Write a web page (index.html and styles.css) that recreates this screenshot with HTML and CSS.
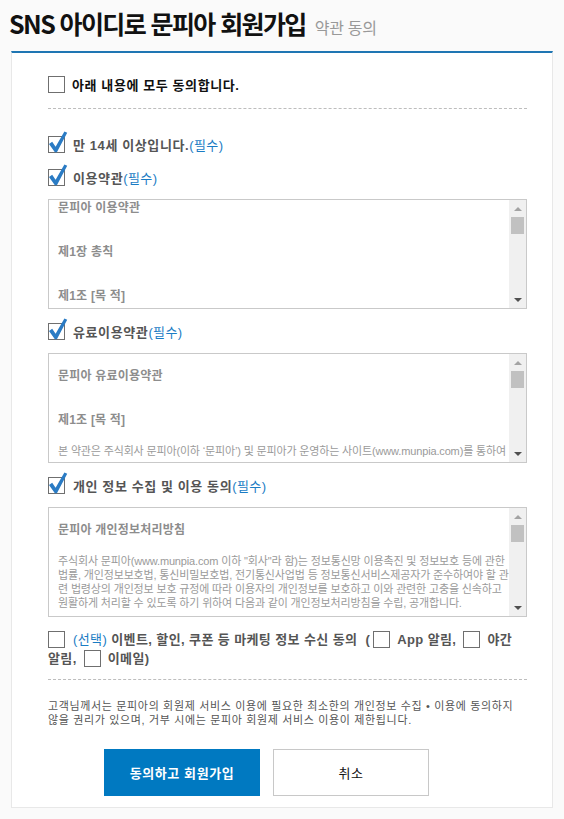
FILE: index.html
```html
<!DOCTYPE html>
<html lang="ko">
<head>
<meta charset="utf-8">
<title>SNS 아이디로 문피아 회원가입 - 약관 동의</title>
<link rel="stylesheet" href="styles.css">
</head>
<body>
<div class="page">
  <header class="head">
    <h1 class="title">SNS 아이디로 문피아 회원가입</h1>
    <span class="subtitle">약관 동의</span>
  </header>
  <main class="panel">
    <div class="row row-all"><span class="cb"></span><span class="lbl lbl-all">아래 내용에 모두 동의합니다.</span></div>
    <hr class="dash dash-top">

    <div class="row row-age"><span class="cb cb-on"><svg class="tick" width="20" height="22" viewBox="0 0 20 22"><path d="M1 13 L4.2 10.8 L7.6 15.8 L16.4 0.6 L19.2 1.8 L8.9 21.2 L6.9 21.2 Z"/></svg></span><span class="lbl">만 14세 이상입니다.</span><span class="req">(필수)</span></div>

    <div class="row row-gap"><span class="cb cb-on"><svg class="tick" width="20" height="22" viewBox="0 0 20 22"><path d="M1 13 L4.2 10.8 L7.6 15.8 L16.4 0.6 L19.2 1.8 L8.9 21.2 L6.9 21.2 Z"/></svg></span><span class="lbl">이용약관</span><span class="req">(필수)</span></div>
    <div class="terms">
      <div class="terms-body terms-body-top">
        <p class="t-title">문피아 이용약관</p>
        <p class="t-head">제1장 총칙</p>
        <p class="t-head">제1조 [목 적]</p>
      </div>
      <div class="sbar"><span class="sb-btn sb-up"></span><span class="sb-thumb"></span><span class="sb-fill"></span><span class="sb-btn sb-down"></span></div>
    </div>

    <div class="row row-after"><span class="cb cb-on"><svg class="tick" width="20" height="22" viewBox="0 0 20 22"><path d="M1 13 L4.2 10.8 L7.6 15.8 L16.4 0.6 L19.2 1.8 L8.9 21.2 L6.9 21.2 Z"/></svg></span><span class="lbl">유료이용약관</span><span class="req">(필수)</span></div>
    <div class="terms">
      <div class="terms-body">
        <p class="t-title">문피아 유료이용약관</p>
        <p class="t-head">제1조 [목 적]</p>
        <p class="t-text">본 약관은 주식회사 문피아(이하 ‘문피아’) 및 문피아가 운영하는 사이트(www.munpia.com)를 통하여</p>
      </div>
      <div class="sbar"><span class="sb-btn sb-up"></span><span class="sb-thumb"></span><span class="sb-fill"></span><span class="sb-btn sb-down"></span></div>
    </div>

    <div class="row row-after"><span class="cb cb-on"><svg class="tick" width="20" height="22" viewBox="0 0 20 22"><path d="M1 13 L4.2 10.8 L7.6 15.8 L16.4 0.6 L19.2 1.8 L8.9 21.2 L6.9 21.2 Z"/></svg></span><span class="lbl">개인 정보 수집 및 이용 동의</span><span class="req">(필수)</span></div>
    <div class="terms">
      <div class="terms-body">
        <p class="t-title">문피아 개인정보처리방침</p>
        <p class="t-text">주식회사 문피아(www.munpia.com 이하 "회사"라 함)는 정보통신망 이용촉진 및 정보보호 등에 관한<br>법률, 개인정보보호법, 통신비밀보호법, 전기통신사업법 등 정보통신서비스제공자가 준수하여야 할 관<br>련 법령상의 개인정보 보호 규정에 따라 이용자의 개인정보를 보호하고 이와 관련한 고충을 신속하고<br>원활하게 처리할 수 있도록 하기 위하여 다음과 같이 개인정보처리방침을 수립, 공개합니다.</p>
      </div>
      <div class="sbar"><span class="sb-btn sb-up"></span><span class="sb-thumb"></span><span class="sb-fill"></span><span class="sb-btn sb-down"></span></div>
    </div>

    <div class="mkt"><span class="cb cb-first"></span><span class="opt">(선택)</span> 이벤트, 할인, 쿠폰 등 마케팅 정보 수신 동의 <span class="paren">(</span><span class="cb cb-in"></span>App 알림, <span class="cb cb-in"></span>야간<br>알림, <span class="cb cb-in"></span>이메일)</div>
    <hr class="dash dash-bottom">

    <p class="info">고객님께서는 문피아의 회원제 서비스 이용에 필요한 최소한의 개인정보 수집 • 이용에 동의하지<br>않을 권리가 있으며, 거부 시에는 문피아 회원제 서비스 이용이 제한됩니다.</p>

    <div class="btns">
      <button class="btn btn-ok" type="button">동의하고 회원가입</button>
      <button class="btn btn-cancel" type="button">취소</button>
    </div>
  </main>
</div>
</body>
</html>
```

FILE: styles.css
```css
* { box-sizing: border-box; }
html, body { margin: 0; padding: 0; }
body {
  background: #fafafa;
  font-family: "Liberation Sans", "Noto Sans CJK KR", sans-serif;
  color: #333;
}
.page { width: 564px; padding: 0 11px; }

.head {
  height: 51px;
  display: flex;
  align-items: baseline;
  padding-top: 6px;
  margin-left: -2px;
}
.title {
  margin: 0;
  font-family: "Noto Sans CJK KR", sans-serif;
  font-size: 25px;
  line-height: 34px;
  font-weight: 700;
  letter-spacing: -1.6px;
  color: #111;
}
.subtitle {
  margin-left: 9px;
  font-family: "Noto Sans CJK KR", sans-serif;
  font-size: 16px;
  letter-spacing: -0.3px;
  color: #999;
}

.panel {
  background: #fff;
  border: 1px solid #e8e8e8;
  border-top: 2px solid #1f76b3;
  padding: 21px 25px 11px 36px;
}

.row {
  display: flex;
  align-items: center;
  height: 20px;
  font-size: 13px;
}
.row-age { margin-top: 25px; }
.row-gap { margin-top: 13px; }
.row-after { margin-top: 12px; }

.cb {
  position: relative;
  display: inline-block;
  width: 17px;
  height: 17px;
  border: 1px solid #6f6f6f;
  background: #fff;
  flex: none;
}
.tick {
  position: absolute;
  left: -1px;
  top: -6px;
  fill: #2a7bc4;
}
.lbl {
  margin-left: 8px;
  font-weight: 700;
  color: #555;
  letter-spacing: 0.6px;
}
.lbl-all { margin-left: 7px; color: #111; }
.req { color: #1a7cc4; letter-spacing: 0.4px; }

.dash {
  margin: 0;
  border: 0;
  border-top: 1px dashed #bdbdbd;
  height: 0;
}
.dash-top { margin-top: 14px; }
.dash-bottom { margin-top: 11px; }

.terms {
  margin-top: 12px;
  height: 110px;
  border: 1px solid #c9c9c9;
  display: flex;
  background: #fff;
}
.terms-body {
  flex: 1;
  overflow: hidden;
  padding: 14px 4px 0 9px;
  color: #999;
}
.terms-body-top { padding-top: 0; }
.terms-body p { margin: 0; white-space: nowrap; }
.t-title {
  font-size: 12px;
  line-height: 16px;
  font-weight: 700;
  color: #8d8d8d;
  letter-spacing: 0.2px;
}
.t-head {
  margin-top: 28px !important;
  font-size: 12px;
  line-height: 16px;
  font-weight: 700;
  color: #8d8d8d;
  letter-spacing: 0.2px;
}
.t-text {
  margin-top: 16px !important;
  font-size: 11px;
  line-height: 14px;
  color: #9a9a9a;
  letter-spacing: -0.15px;
}

.sbar {
  width: 17px;
  flex: none;
  background: #f0f0f0;
  display: flex;
  flex-direction: column;
}
.sb-btn {
  height: 17px;
  display: flex;
  align-items: center;
  justify-content: center;
}
.sb-up::before {
  content: "";
  border-left: 4px solid transparent;
  border-right: 4px solid transparent;
  border-bottom: 4px solid #a3a3a3;
}
.sb-down::before {
  content: "";
  border-left: 4px solid transparent;
  border-right: 4px solid transparent;
  border-top: 4px solid #505050;
}
.sb-thumb {
  height: 17px;
  margin: 0 2px;
  background: #c1c1c1;
}
.sb-fill { flex: 1; }

.mkt {
  margin-top: 13px;
  font-size: 13px;
  line-height: 19px;
  font-weight: 700;
  color: #555;
  letter-spacing: 0.4px;
}
.mkt .cb { vertical-align: -4px; }
.cb-first { margin-right: 8px; }
.cb-in { margin: 0 7px 0 3px; }
.opt { color: #1a7cc4; font-weight: 400; }
.paren { margin-left: 4px; }

.info {
  margin: 19px 0 0;
  font-size: 11px;
  line-height: 14px;
  color: #555;
  letter-spacing: 0.65px;
}

.btns {
  margin-top: 22px;
  padding-left: 56px;
  display: flex;
  gap: 13px;
}
.btn {
  width: 156px;
  height: 47px;
  font-family: "Liberation Sans", "Noto Sans CJK KR", sans-serif;
  font-size: 13px;
  font-weight: 700;
  letter-spacing: 0.6px;
  cursor: pointer;
  padding: 0;
}
.btn-ok {
  background: #0079c1;
  border: 1px solid #0079c1;
  color: #fff;
}
.btn-cancel {
  background: #fff;
  border: 1px solid #c8c8c8;
  color: #111;
  font-weight: 400;
}
```
